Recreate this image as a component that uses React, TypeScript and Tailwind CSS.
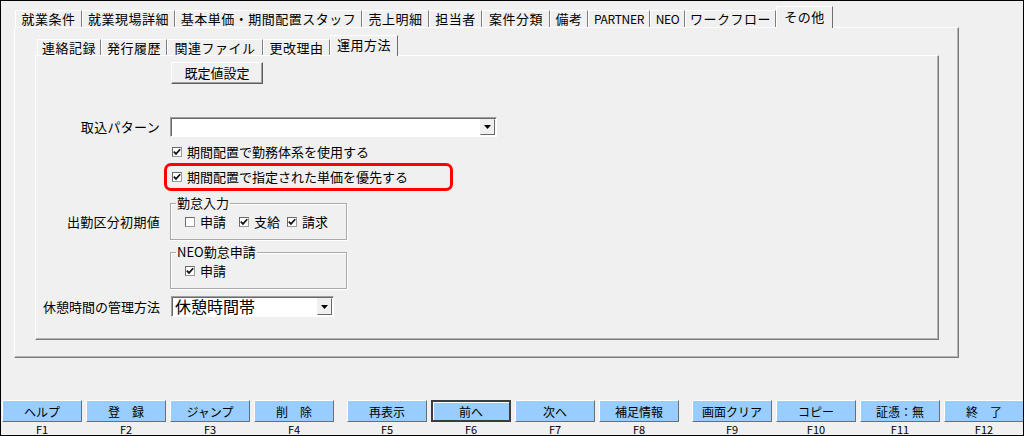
import React from "react";

const FONT = "font-['Noto_Sans_CJK_JP','Noto_Sans',sans-serif]";

function Check({ checked }: { checked: boolean }) {
  return (
    <span className="flex h-[10px] w-[10px] shrink-0 items-center justify-center border border-t-[#6a6a6a] border-l-[#6a6a6a] border-r-[#9a9a9a] border-b-[#9a9a9a] bg-white">
      {checked && (
        <svg width="8" height="8" viewBox="0 0 8 8">
          <path d="M0.8 3.6 L3 5.9 L7.2 1.3" stroke="#111" strokeWidth="1.7" fill="none" />
        </svg>
      )}
    </span>
  );
}

function CheckItem({ checked, label, cls = "" }: { checked: boolean; label: string; cls?: string }) {
  return (
    <div className={"flex h-[14px] items-center gap-[5px] " + cls}>
      <Check checked={checked} />
      <span className="text-[13px] leading-[14px] whitespace-nowrap">{label}</span>
    </div>
  );
}

function Arrow() {
  return (
    <svg width="7" height="4" viewBox="0 0 7 4">
      <path d="M0 0 H7 L3.5 4 Z" fill="#000" />
    </svg>
  );
}

const outerTabs: { label: string; w: string; small?: boolean; active?: boolean }[] = [
  { label: "就業条件", w: "w-[67px]" },
  { label: "就業現場詳細", w: "w-[93px]" },
  { label: "基本単価・期間配置スタッフ", w: "w-[187px]" },
  { label: "売上明細", w: "w-[67px]" },
  { label: "担当者", w: "w-[53px]" },
  { label: "案件分類", w: "w-[68px]" },
  { label: "備考", w: "w-[38px]" },
  { label: "PARTNER", w: "w-[62px]", small: true },
  { label: "NEO", w: "w-[35px]", small: true },
  { label: "ワークフロー", w: "w-[91px]" },
  { label: "その他", w: "w-[57px]", active: true },
];

const innerTabs: { label: string; w: string; active?: boolean }[] = [
  { label: "連絡記録", w: "w-[64px]" },
  { label: "発行履歴", w: "w-[66px]" },
  { label: "関連ファイル", w: "w-[96px]" },
  { label: "更改理由", w: "w-[67px]" },
  { label: "運用方法", w: "w-[68px]", active: true },
];

const keyGroups: [string, string][][] = [
  [
    ["ヘルプ", "F1"],
    ["登　録", "F2"],
    ["ジャンプ", "F3"],
    ["削　除", "F4"],
  ],
  [
    ["再表示", "F5"],
    ["前へ", "F6"],
    ["次へ", "F7"],
    ["補足情報", "F8"],
  ],
  [
    ["画面クリア", "F9"],
    ["コピー", "F10"],
    ["証憑：無", "F11"],
    ["終　了", "F12"],
  ],
];

export default function App() {
  return (
    <div
      className={
        "flex h-[436px] w-[1024px] flex-col overflow-hidden border border-black bg-[#f0f0f0] text-black " + FONT
      }
    >
      {/* outer tabs */}
      <div className="flex h-[21px] items-end pl-[14px] mt-[5px]">
        {outerTabs.map((t) =>
          t.active ? (
            <div
              key={t.label}
              className={
                t.w +
                " relative z-10 -mb-px flex h-[22px] items-center justify-center border-t border-l border-r border-t-white border-l-white border-r-[#6e6e6e] bg-[#f0f0f0] pb-[2px] text-[13px] leading-[14px] tracking-[0.5px]"
              }
            >
              {t.label}
            </div>
          ) : (
            <div
              key={t.label}
              className={
                t.w +
                " flex h-[17px] items-center justify-center border-t border-l border-r border-t-white border-l-white border-r-[#7e7e7e] whitespace-nowrap " +
                (t.small ? "text-[12px] leading-[14px] tracking-[-0.3px]" : "text-[13px] leading-[14px] tracking-[0.5px]")
              }
            >
              {t.label}
            </div>
          )
        )}
      </div>

      {/* outer panel */}
      <div className="ml-[13px] flex h-[331px] w-[945px] flex-col border border-t-white border-l-white border-r-[#7a7a7a] border-b-[#7a7a7a] shadow-[inset_-1px_-1px_0_#b4b4b4]">
        {/* inner tabs */}
        <div className="mt-[7px] flex h-[20px] items-end pl-[22px]">
          {innerTabs.map((t) =>
            t.active ? (
              <div
                key={t.label}
                className={
                  t.w +
                  " relative z-10 -mb-px flex h-[21px] items-center justify-center border-t border-l border-r border-t-white border-l-white border-r-[#6e6e6e] bg-[#f0f0f0] pb-[2px] text-[13px] leading-[14px] tracking-[0.5px]"
                }
              >
                {t.label}
              </div>
            ) : (
              <div
                key={t.label}
                className={
                  t.w +
                  " flex h-[16px] items-center justify-center border-t border-l border-r border-t-white border-l-white border-r-[#7e7e7e] text-[13px] leading-[14px] tracking-[0.5px] whitespace-nowrap"
                }
              >
                {t.label}
              </div>
            )
          )}
        </div>

        {/* inner panel */}
        <div className="ml-[20px] flex h-[285px] w-[904px] flex-col border border-t-white border-l-white border-r-[#7a7a7a] border-b-[#7a7a7a] shadow-[inset_-1px_-1px_0_#b4b4b4]">
          {/* 既定値設定 */}
          <div className="mt-[6px] ml-[135px] flex h-[22px] w-[92px] items-center justify-center border border-t-white border-l-white border-r-[#5e5e5e] border-b-[#5e5e5e] bg-[#f0f0f0] shadow-[inset_-1px_-1px_0_#a0a0a0] text-[13px] leading-[14px]">
            既定値設定
          </div>

          {/* 取込パターン */}
          <div className="mt-[33px] flex h-[20px] items-center">
            <div className="w-[124px] text-right text-[13px] leading-[14px] tracking-[0.3px]">取込パターン</div>
            <div className="ml-[10px] flex h-[20px] w-[327px] justify-end border border-t-[#a0a0a0] border-l-[#a0a0a0] border-r-white border-b-white bg-white p-[1px] shadow-[inset_1px_1px_0_#696969]">
              <div className="flex h-full w-[15px] items-center justify-center border border-t-[#f0f0f0] border-l-[#f0f0f0] border-r-[#696969] border-b-[#696969] bg-[#f0f0f0]">
                <Arrow />
              </div>
            </div>
          </div>

          {/* checkbox 1 */}
          <div className="mt-[8px] ml-[136px]">
            <CheckItem checked label="期間配置で勤務体系を使用する" />
          </div>

          {/* red highlight */}
          <div className="mt-[4px] ml-[128px] flex h-[28px] w-[289px] items-center rounded-[7px] border-[3px] border-[#ff0000] pl-[5px]">
            <CheckItem checked label="期間配置で指定された単価を優先する" />
          </div>

          {/* 勤怠入力 */}
          <div className="mt-[5px] flex items-center">
            <div className="mt-[8px] w-[124px] text-right text-[13px] leading-[14px] tracking-[0.3px]">出勤区分初期値</div>
            <fieldset className="ml-[10px] w-[177px] border border-[#a9a9a9] shadow-[inset_1px_1px_0_#fff,1px_1px_0_#fff] pl-[14px]">
              <legend className="-ml-[9px] px-[1px] text-[13px] leading-[14px]">勤怠入力</legend>
              <div className="mt-[5px] mb-[10px] flex h-[14px]">
                <CheckItem checked={false} label="申請" />
                <CheckItem checked label="支給" cls="ml-[13px]" />
                <CheckItem checked label="請求" cls="ml-[7px]" />
              </div>
            </fieldset>
          </div>

          {/* NEO勤怠申請 */}
          <div className="mt-[5px] ml-[134px]">
            <fieldset className="w-[177px] border border-[#a9a9a9] shadow-[inset_1px_1px_0_#fff,1px_1px_0_#fff] pl-[14px]">
              <legend className="-ml-[9px] px-[1px] text-[13px] leading-[14px]">NEO勤怠申請</legend>
              <div className="mt-[5px] mb-[10px] flex h-[14px]">
                <CheckItem checked label="申請" />
              </div>
            </fieldset>
          </div>

          {/* 休憩時間の管理方法 */}
          <div className="mt-[7px] flex h-[21px] items-center">
            <div className="w-[124px] text-right text-[13px] leading-[14px] whitespace-nowrap">休憩時間の管理方法</div>
            <div className="ml-[11px] flex h-[21px] w-[163px] items-center justify-between border border-t-[#a0a0a0] border-l-[#a0a0a0] border-r-white border-b-white bg-white p-[1px] shadow-[inset_1px_1px_0_#696969]">
              <span className="pl-[2px] text-[16px] leading-[17px]">休憩時間帯</span>
              <div className="flex h-full w-[15px] items-center justify-center border border-t-[#f0f0f0] border-l-[#f0f0f0] border-r-[#696969] border-b-[#696969] bg-[#f0f0f0]">
                <Arrow />
              </div>
            </div>
          </div>
        </div>
      </div>

      {/* function keys */}
      <div className="mt-auto flex pl-[1px]">
        {keyGroups.map((g, gi) => (
          <div key={gi} className={"flex gap-[4px] " + (gi > 0 ? "ml-[13px]" : "")}>
            {g.map(([label, key]) => (
              <div key={key} className="flex w-[80px] flex-col">
                <div
                  className={
                    "flex h-[22px] items-center justify-center bg-[#99ccff] text-[12px] leading-[13px] whitespace-nowrap " +
                    (key === "F6"
                      ? "border-2 border-[#3c3c3c] shadow-[inset_1px_1px_0_#fff]"
                      : "border border-t-white border-l-white border-r-[#6d6d6d] border-b-[#6d6d6d]")
                  }
                >
                  {label}
                </div>
                <div className="mt-[1px] h-[12px] text-center text-[11px] leading-[12px]">{key}</div>
              </div>
            ))}
          </div>
        ))}
      </div>
    </div>
  );
}
